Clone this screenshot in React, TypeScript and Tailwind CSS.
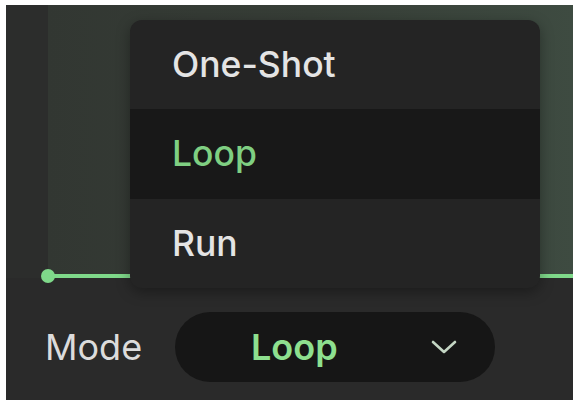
import { useState } from "react";

const modes = ["One-Shot", "Loop", "Run"];

function Chevron() {
  return (
    <svg width="28" height="16" viewBox="0 0 28 16" fill="none">
      <path
        d="M3 3 L14 13 L25 3"
        stroke="#c4d6c4"
        strokeWidth="2.6"
        strokeLinecap="round"
        strokeLinejoin="round"
      />
    </svg>
  );
}

function Envelope() {
  return (
    <div className="relative flex h-[273px]">
      <div className="w-[42px] bg-[#2c2d2c]" />
      <div className="relative flex-1 bg-gradient-to-r from-[#323732] via-[#373e37] to-[#3e4b41]">
        <svg
          className="absolute inset-0 h-full w-full overflow-visible"
          preserveAspectRatio="none"
        >
          <line x1="0" y1="271" x2="525" y2="271" stroke="#7fd98a" strokeWidth="4" />
        </svg>
        <div className="absolute bottom-[-5px] left-[-7px] h-[14px] w-[14px] rounded-full bg-[#7fd98a]" />
      </div>
    </div>
  );
}

function ModeMenu({ value }: { value: string }) {
  return (
    <div className="absolute left-[124px] top-[15px] w-[410px] overflow-hidden rounded-[12px] bg-[#242424] shadow-[0_4px_14px_rgba(0,0,0,0.35)]">
      {modes.map((m) => {
        const active = m === value;
        return (
          <div
            key={m}
            className={
              active
                ? "flex h-[90px] items-center bg-[#181818] pl-[42px] text-[#7fcf82]"
                : "flex h-[89px] items-center pl-[42px] text-[#e4e4e4]"
            }
          >
            {m}
          </div>
        );
      })}
    </div>
  );
}

export default function App() {
  const [mode] = useState("Loop");

  return (
    <div className="h-[404px] w-[576px] bg-white pb-[4px] pl-[6px] pr-[3px] pt-[5px] font-['Inter','Liberation_Sans',sans-serif]">
      <div className="relative h-[395px] bg-[#2a2a2a] text-[35.5px] font-medium">
        <Envelope />
        <div className="flex items-center pl-[39px] pt-[34px]">
          <span className="w-[130px] text-[36px] font-normal text-[#dcdcdc]">Mode</span>
          <div className="flex h-[70px] w-[320px] items-center rounded-full bg-[#161616] pl-[76px]">
            <span className="w-[179px] text-[36px] font-semibold text-[#8ee08f]">{mode}</span>
            <Chevron />
          </div>
        </div>
        <ModeMenu value={mode} />
      </div>
    </div>
  );
}
